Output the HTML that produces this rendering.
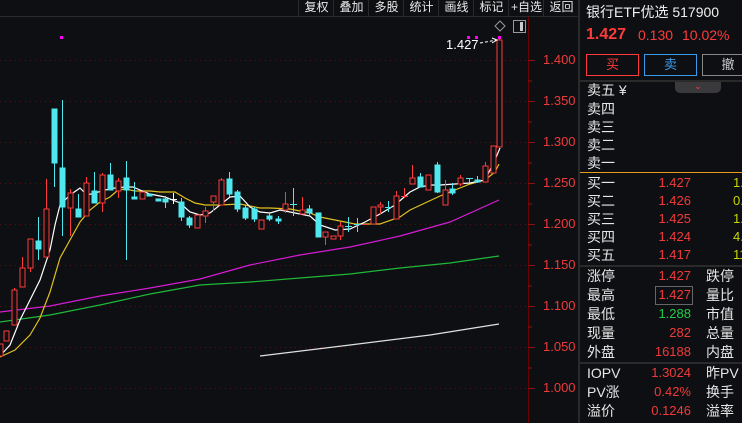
<!DOCTYPE html>
<html><head><meta charset="utf-8"><style>
body{margin:0;width:742px;height:423px;background:#0e0f12;overflow:hidden;font-family:"Liberation Sans","Noto Sans CJK SC",sans-serif;position:relative}
.a{position:absolute;white-space:nowrap}
.tb{position:absolute;top:0;height:16px;font-size:12px;color:#e8e8e8;line-height:15px;text-align:center;border-left:1px solid #2a2a2a}
.l{position:absolute;left:587px;font-size:14px;color:#e6e6e6;line-height:16px}
.p{position:absolute;right:51px;font-size:13px;color:#f03a3a;line-height:16px;text-align:right}
.r{position:absolute;left:706px;font-size:14px;color:#e6e6e6;line-height:16px}
.v{position:absolute;left:733px;font-size:13px;color:#c8d400;line-height:16px}
.ax{position:absolute;left:543px;font-size:13px;color:#f03a3a;line-height:14px}
</style></head><body>
<div class="a" style="left:0;top:0;width:578px;height:16px;border-bottom:1px solid #2a2a2a"></div>
<div class="tb" style="left:298px;width:35px">复权</div>
<div class="tb" style="left:333px;width:35px">叠加</div>
<div class="tb" style="left:368px;width:35px">多股</div>
<div class="tb" style="left:403px;width:35px">统计</div>
<div class="tb" style="left:438px;width:35px">画线</div>
<div class="tb" style="left:473px;width:35px">标记</div>
<div class="tb" style="left:508px;width:35px">+自选</div>
<div class="tb" style="left:543px;width:35px">返回</div>
<div class="a" style="left:578px;top:0;width:2px;height:423px;background:#2a2a2a"></div>
<svg class="a" style="left:0;top:0" width="578" height="423">
<g stroke="#5a1010" stroke-dasharray="1,4" stroke-width="1">
<line x1="0" x2="528" y1="60.5" y2="60.5"/><line x1="0" x2="528" y1="101.5" y2="101.5"/><line x1="0" x2="528" y1="142.5" y2="142.5"/><line x1="0" x2="528" y1="183.5" y2="183.5"/><line x1="0" x2="528" y1="224.5" y2="224.5"/><line x1="0" x2="528" y1="265.5" y2="265.5"/><line x1="0" x2="528" y1="306.5" y2="306.5"/><line x1="0" x2="528" y1="347.5" y2="347.5"/><line x1="0" x2="528" y1="388.5" y2="388.5"/>
</g>
<line x1="528.5" y1="17" x2="528.5" y2="423" stroke="#6a0000"/>
<g stroke="#8a1010">
<line x1="528" x2="535" y1="60.5" y2="60.5"/><line x1="528" x2="535" y1="101.5" y2="101.5"/><line x1="528" x2="535" y1="142.5" y2="142.5"/><line x1="528" x2="535" y1="183.5" y2="183.5"/><line x1="528" x2="535" y1="224.5" y2="224.5"/><line x1="528" x2="535" y1="265.5" y2="265.5"/><line x1="528" x2="535" y1="306.5" y2="306.5"/><line x1="528" x2="535" y1="347.5" y2="347.5"/><line x1="528" x2="535" y1="388.5" y2="388.5"/>
<line x1="528" x2="532" y1="81" y2="81"/><line x1="528" x2="532" y1="122" y2="122"/><line x1="528" x2="532" y1="163" y2="163"/><line x1="528" x2="532" y1="204" y2="204"/><line x1="528" x2="532" y1="245" y2="245"/><line x1="528" x2="532" y1="286" y2="286"/><line x1="528" x2="532" y1="327" y2="327"/><line x1="528" x2="532" y1="368" y2="368"/>
</g>
<g fill="none" stroke-width="1.2">
<polyline stroke="#e0e0e0" points="260,356 350,345 430,335 499,324"/>
<polyline stroke="#1fb83a" points="0,322 50,315 100,305 150,294 200,285 250,282 300,278 350,274 400,268 450,263 499,256"/>
<polyline stroke="#d41cd4" points="0,312 50,306 100,296 150,288 200,279 250,265 300,255 350,247 400,236 450,222 499,200"/>
<polyline stroke="#e0c020" points="0,357 15,350 30,335 40,318 50,292 60,258 70,240 80,222 90,210 100,202 110,197 118,190 125,189 135,191 150,191 160,192 175,192 185,198 195,203 205,205 220,205 240,204 260,208 270,208 290,209 310,213 320,217 335,220 355,224 365,224 380,224 400,217 410,210 425,203 440,196 455,190 470,184 485,180 495,172 499,164"/>
<polyline stroke="#ffffff" points="0,356 10,345 20,320 30,300 40,280 50,250 55,225 60,205 70,195 80,188 87,195 95,193 105,190 115,188 125,187 133,187 140,190 150,194 165,197 180,203 190,212 200,215 210,213 220,205 230,197 240,196 250,207 260,212 270,213 280,210 290,212 300,214 310,216 320,225 335,230 350,229 365,222 380,214 395,205 410,192 420,187 430,185 440,185 455,184 470,183 485,180 495,160 500,148"/>
</g>
<g stroke="#ff3b3b" fill="#0e0f12">
<rect x="-2" y="344" width="5" height="12"/>
<rect x="4" y="331" width="5" height="10"/>
<line x1="14.5" y1="288" x2="14.5" y2="290"/><rect x="12" y="290" width="5" height="35"/>
<line x1="22.5" y1="257" x2="22.5" y2="268"/><rect x="20" y="268" width="5" height="19"/>
<line x1="30.5" y1="257" x2="30.5" y2="272"/><rect x="28" y="239" width="5" height="29"/>
<line x1="46.5" y1="179" x2="46.5" y2="209"/><rect x="44" y="209" width="5" height="48"/>
<line x1="70.5" y1="189" x2="70.5" y2="236"/><rect x="68" y="193" width="5" height="15"/>
<line x1="86.5" y1="177" x2="86.5" y2="216"/><rect x="84" y="183" width="5" height="33"/>
<line x1="102.5" y1="173" x2="102.5" y2="212"/><rect x="100" y="175" width="5" height="28"/>
<line x1="118.5" y1="178" x2="118.5" y2="198"/><rect x="116" y="181" width="5" height="10"/>
<rect x="140" y="192" width="5" height="7"/>
<rect x="195" y="215" width="5" height="13"/>
<line x1="205.5" y1="207" x2="205.5" y2="223"/><rect x="203" y="211" width="5" height="5"/>
<line x1="213.5" y1="196" x2="213.5" y2="211"/><rect x="211" y="196" width="5" height="6"/>
<line x1="221.5" y1="178" x2="221.5" y2="205"/><rect x="219" y="180" width="5" height="25"/>
<rect x="259" y="220" width="5" height="9"/>
<line x1="285.5" y1="192" x2="285.5" y2="213"/><rect x="283" y="204" width="5" height="6"/>
<line x1="302.5" y1="197" x2="302.5" y2="214"/><rect x="300" y="210" width="5" height="4"/>
<line x1="325.5" y1="232" x2="325.5" y2="245"/><rect x="323" y="232" width="5" height="5"/>
<rect x="331" y="236" width="5" height="3"/>
<line x1="340.5" y1="222" x2="340.5" y2="240"/><rect x="338" y="226" width="5" height="10"/>
<line x1="362" y1="224.5" x2="368" y2="224.5"/>
<rect x="371" y="207" width="5" height="17"/>
<line x1="380.5" y1="202" x2="380.5" y2="214"/><rect x="378" y="205" width="5" height="2"/>
<line x1="396.5" y1="191" x2="396.5" y2="219"/><rect x="394" y="196" width="5" height="23"/>
<line x1="404.5" y1="188" x2="404.5" y2="198"/><line x1="401" y1="196.5" x2="408" y2="196.5"/>
<line x1="412.5" y1="165" x2="412.5" y2="184"/><rect x="410" y="178" width="5" height="6"/>
<rect x="426" y="175" width="5" height="15"/>
<line x1="445.5" y1="180" x2="445.5" y2="205"/><rect x="443" y="190" width="5" height="15"/>
<line x1="460.5" y1="175" x2="460.5" y2="186"/><rect x="458" y="178" width="5" height="6"/>
<line x1="485.5" y1="162" x2="485.5" y2="182"/><rect x="483" y="166" width="5" height="16"/>
<rect x="491" y="146" width="5" height="27"/>
<line x1="499.5" y1="37" x2="499.5" y2="40"/><rect x="497" y="40" width="5" height="107"/>
</g>
<g fill="#4ee8ee" stroke="#4ee8ee">
<line x1="38.5" y1="217" x2="38.5" y2="260"/><rect x="36" y="241" width="5" height="8"/>
<line x1="54.5" y1="109" x2="54.5" y2="187"/><rect x="52" y="109" width="5" height="54"/>
<line x1="62.5" y1="100" x2="62.5" y2="236"/><rect x="60" y="168" width="5" height="39"/>
<line x1="78.5" y1="194" x2="78.5" y2="217"/><rect x="76" y="209" width="5" height="8"/>
<line x1="94.5" y1="172" x2="94.5" y2="203"/><rect x="92" y="191" width="5" height="12"/>
<line x1="110.5" y1="163" x2="110.5" y2="190"/><rect x="108" y="175" width="5" height="15"/>
<line x1="126.5" y1="161" x2="126.5" y2="260"/><rect x="124" y="178" width="5" height="12"/>
<line x1="134.5" y1="182" x2="134.5" y2="199"/><rect x="132" y="197" width="5" height="2"/>
<rect x="147" y="194" width="5" height="2"/>
<rect x="156" y="199" width="5" height="2"/>
<line x1="165.5" y1="196" x2="165.5" y2="208"/><rect x="163" y="199" width="5" height="3"/>
<line x1="181.5" y1="198" x2="181.5" y2="221"/><rect x="179" y="202" width="5" height="15"/>
<line x1="189.5" y1="216" x2="189.5" y2="228"/><rect x="187" y="218" width="5" height="7"/>
<line x1="229.5" y1="172" x2="229.5" y2="197"/><rect x="227" y="179" width="5" height="15"/>
<line x1="237.5" y1="190" x2="237.5" y2="212"/><rect x="235" y="192" width="5" height="17"/>
<line x1="245.5" y1="205" x2="245.5" y2="220"/><rect x="243" y="208" width="5" height="10"/>
<line x1="254.5" y1="207" x2="254.5" y2="222"/><rect x="252" y="209" width="5" height="10"/>
<line x1="269.5" y1="212" x2="269.5" y2="221"/><rect x="267" y="216" width="5" height="3"/>
<line x1="278.5" y1="216" x2="278.5" y2="224"/><rect x="276" y="219" width="5" height="2"/>
<line x1="293.5" y1="188" x2="293.5" y2="216"/><line x1="290" y1="204.5" x2="297" y2="204.5"/>
<line x1="309.5" y1="205" x2="309.5" y2="216"/><rect x="307" y="209" width="5" height="4"/>
<rect x="316" y="213" width="5" height="24"/>
<line x1="348.5" y1="217" x2="348.5" y2="232"/><line x1="345" y1="226.5" x2="352" y2="226.5"/>
<line x1="357.5" y1="218" x2="357.5" y2="232"/><line x1="354" y1="224.5" x2="361" y2="224.5"/>
<line x1="388.5" y1="201" x2="388.5" y2="212"/><line x1="385" y1="207.5" x2="392" y2="207.5"/>
<line x1="420.5" y1="173" x2="420.5" y2="187"/><rect x="418" y="177" width="5" height="10"/>
<line x1="437.5" y1="162" x2="437.5" y2="193"/><rect x="435" y="165" width="5" height="27"/>
<line x1="452.5" y1="183" x2="452.5" y2="195"/><rect x="450" y="189" width="5" height="4"/>
<line x1="469.5" y1="178" x2="469.5" y2="183"/><line x1="466" y1="178.5" x2="473" y2="178.5"/>
<line x1="477.5" y1="176" x2="477.5" y2="183"/><rect x="475" y="180" width="5" height="2"/>
</g>
<line x1="173.5" y1="193" x2="173.5" y2="204" stroke="#fff"/><line x1="170" y1="199.5" x2="177" y2="199.5" stroke="#fff"/>
<rect x="60" y="36" width="3" height="3" fill="#ff00ff"/>
<rect x="467" y="36" width="3" height="3" fill="#ff00ff"/><rect x="475" y="36" width="3" height="3" fill="#ff00ff"/><rect x="498" y="36" width="3" height="3" fill="#ff00ff"/>
<text x="446" y="49" fill="#ffffff" font-size="13" font-family="Liberation Sans">1.427</text>
<polyline points="480,43 497,40" stroke="#fff" stroke-dasharray="3,2" fill="none"/>
<polyline points="492,38 497,40 492,43" stroke="#fff" fill="none"/>
<path d="M500,21 L505,26 L500,31 L495,26 Z" stroke="#999" fill="none"/>
<rect x="513.5" y="20.5" width="12" height="12" stroke="#999" fill="none"/>
<rect x="520" y="22" width="3" height="9" fill="#ccc"/>
</svg>
<div class="ax" style="top:53px">1.400</div>
<div class="ax" style="top:94px">1.350</div>
<div class="ax" style="top:135px">1.300</div>
<div class="ax" style="top:176px">1.250</div>
<div class="ax" style="top:217px">1.200</div>
<div class="ax" style="top:258px">1.150</div>
<div class="ax" style="top:299px">1.100</div>
<div class="ax" style="top:340px">1.050</div>
<div class="ax" style="top:381px">1.000</div>

<div class="a" style="left:586px;top:2px;font-size:14px;color:#f0f0f0">银行ETF优选 517900</div>
<div class="a" style="left:586px;top:26px;font-size:16px;font-weight:bold;color:#ff3b3b">1.427</div>
<div class="a" style="left:638px;top:27px;font-size:14px;color:#ff3b3b">0.130</div>
<div class="a" style="left:682px;top:27px;font-size:14px;color:#ff3b3b">10.02%</div>
<div class="a" style="left:586px;top:54px;width:51px;height:20px;border:1px solid #ff3b3b;color:#ff3b3b;font-size:13px;text-align:center;line-height:20px">买</div>
<div class="a" style="left:644px;top:54px;width:51px;height:20px;border:1px solid #3a9ae8;color:#3a9ae8;font-size:13px;text-align:center;line-height:20px">卖</div>
<div class="a" style="left:702px;top:54px;width:50px;height:20px;border:1px solid #888;color:#ccc;font-size:13px;text-align:center;line-height:20px">撤</div>
<div class="a" style="left:580px;top:80px;width:162px;height:2px;background:#2a2a2a"></div>
<div class="a" style="left:675px;top:82px;width:46px;height:11px;background:#3a3a3c;border-radius:0 0 5px 5px;color:#ff3b3b;font-size:9px;text-align:center;line-height:9px">⌄</div>
<div class="l" style="top:82px">卖五 ¥</div>
<div class="l" style="top:101px">卖四</div>
<div class="l" style="top:119px">卖三</div>
<div class="l" style="top:137px">卖二</div>
<div class="l" style="top:155px">卖一</div>
<div class="a" style="left:580px;top:172px;width:162px;height:1px;background:#e89a20"></div>
<div class="l" style="top:175px">买一</div><div class="p" style="top:175px">1.427</div><div class="v" style="top:175px">1.</div>
<div class="l" style="top:193px">买二</div><div class="p" style="top:193px">1.426</div><div class="v" style="top:193px">0.</div>
<div class="l" style="top:211px">买三</div><div class="p" style="top:211px">1.425</div><div class="v" style="top:211px">1.</div>
<div class="l" style="top:229px">买四</div><div class="p" style="top:229px">1.424</div><div class="v" style="top:229px">4.</div>
<div class="l" style="top:247px">买五</div><div class="p" style="top:247px">1.417</div><div class="v" style="top:247px">11.</div>
<div class="a" style="left:580px;top:265px;width:162px;height:2px;background:#2a2a2a"></div>
<div class="l" style="top:268px">涨停</div><div class="p" style="top:268px">1.427</div><div class="r" style="top:268px">跌停</div>
<div class="l" style="top:287px">最高</div><div class="p" style="top:287px">1.427</div><div class="r" style="top:287px">量比</div>
<div class="a" style="left:655px;top:286px;width:36px;height:17px;border:1px solid #666"></div>
<div class="l" style="top:306px">最低</div><div class="p" style="top:306px;color:#22cc44">1.288</div><div class="r" style="top:306px">市值</div>
<div class="l" style="top:325px">现量</div><div class="p" style="top:325px">282</div><div class="r" style="top:325px">总量</div>
<div class="l" style="top:344px">外盘</div><div class="p" style="top:344px">16188</div><div class="r" style="top:344px">内盘</div>
<div class="a" style="left:580px;top:362px;width:162px;height:2px;background:#2a2a2a"></div>
<div class="l" style="top:365px">IOPV</div><div class="p" style="top:365px">1.3024</div><div class="r" style="top:365px">昨PV</div>
<div class="l" style="top:384px">PV涨</div><div class="p" style="top:384px">0.42%</div><div class="r" style="top:384px">换手</div>
<div class="l" style="top:403px">溢价</div><div class="p" style="top:403px">0.1246</div><div class="r" style="top:403px">溢率</div>
</body></html>
